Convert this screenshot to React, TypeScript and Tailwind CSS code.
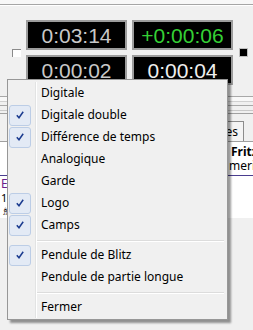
import React from "react";

type Item = { label: string; checked?: boolean } | { sep: true };

const items: Item[] = [
  { label: "Digitale" },
  { label: "Digitale double", checked: true },
  { label: "Différence de temps", checked: true },
  { label: "Analogique" },
  { label: "Garde" },
  { label: "Logo", checked: true },
  { label: "Camps", checked: true },
  { sep: true },
  { label: "Pendule de Blitz", checked: true },
  { label: "Pendule de partie longue" },
  { sep: true },
  { label: "Fermer" },
];

function Check() {
  return (
    <svg width="8" height="8" viewBox="0 0 8 8">
      <path d="M0.8 4.2 L3 6.8 L7.2 0.8" fill="none" stroke="#1b3b8f" strokeWidth="1.5" />
    </svg>
  );
}

function Clock({ text, color }: { text: string; color: string }) {
  return (
    <div className="h-[30px] bg-black border-2 border-[#9c9c9c] flex items-center justify-center">
      <span
        className={`text-[21px] leading-none ${color}`}
        style={{ fontFamily: '"Liberation Sans", Arial, sans-serif' }}
      >
        {text}
      </span>
    </div>
  );
}

export default function App() {
  return (
    <div
      className="relative w-[253px] h-[330px] overflow-hidden bg-[#f0f0f0] text-black"
      style={{ fontFamily: '"Noto Sans", "Open Sans", sans-serif' }}
    >
      {/* top strip */}
      <div className="h-[4px] bg-[#f7f7f7]" />
      <div className="h-px bg-[#a5a5a5]" />
      <div className="h-px bg-white" />

      {/* clocks */}
      <div className="flex items-center pl-[12px] pt-[14px]">
        <div className="w-[9px] h-[8px] bg-white border-t border-l border-[#8a8a8a]" />
        <div className="ml-[5px] grid grid-cols-[101px_101px] gap-[5px]">
          <Clock text="0:03:14" color="text-[#c8c8c8]" />
          <Clock text="+0:00:06" color="text-[#35d035]" />
          <Clock text="0:00:02" color="text-[#c8c8c8]" />
          <Clock text="0:00:04" color="text-[#eeeeee]" />
        </div>
        <div className="ml-[6px] w-[9px] h-[9px] bg-black border border-[#c0c0c0]" />
      </div>

      {/* background toolbar lines */}
      <div className="h-[11px]" />
      <div className="h-px bg-[#a8a8a8]" />
      <div className="h-[4px] bg-[#f8f8f8]" />
      <div className="h-px bg-[#d0d0d0]" />
      <div className="h-[3px]" />
      <div className="h-px bg-[#a8a8a8]" />
      <div className="h-[4px]" />
      <div className="h-px bg-[#c8c8c8]" />
      <div className="h-[2px]" />
      <div className="h-px bg-[#a0a0a0]" />
      <div className="h-[7px]" />

      {/* tabs */}
      <div className="h-[20px] flex justify-end pr-[9px]">
        <div className="h-[20px] px-[5px] border-t border-l border-r border-[#8c8c8c] bg-[#f4f4f4] text-[12px] leading-[20px]">
          Notes
        </div>
      </div>
      <div className="h-px bg-[#a0a0a0]" />

      {/* panel */}
      <div className="bg-white flex">
        <div className="w-[229px]" />
        <div className="flex-1 whitespace-nowrap overflow-hidden">
          <div className="pl-[2px] pt-[3px] h-[17px] leading-[13px] text-[12px] font-bold">Fritz</div>
          <div className="h-[13px] leading-[13px] text-[12px]">meric</div>
          <div className="h-[3px]" />
        </div>
      </div>
      <div className="h-px bg-[#4a3d8f]" />
      <div className="bg-white flex h-[42px] whitespace-nowrap">
        <div className="w-[229px] pl-[1px] pt-[1px]">
          <div className="h-[14px] leading-[14px] text-[12px] text-[#6a1f8a]">E</div>
          <div className="h-[14px] leading-[14px] text-[11px]">1</div>
          <div className="h-[13px] leading-[13px] text-[10px]">♗</div>
        </div>
        <div className="flex-1 pl-[1px] pt-[19px] h-[14px] leading-[14px] text-[12px] overflow-hidden">exd4</div>
      </div>

      {/* context menu */}
      <div
        className="absolute left-[7px] top-[79px] w-[221px] border border-[#979797] bg-[#f0f0f0] pt-[2px] pb-[1px] shadow-[3px_3px_2px_rgba(0,0,0,0.4)] text-[12px]"
      >
        {items.map((it, i) =>
          "sep" in it ? (
            <div key={i} className="flex h-[8px]">
              <div className="w-[28px] border-r border-[#e2e3e3]" />
              <div className="flex-1 border-l border-white pt-[4px] pr-[3px]">
                <div className="h-px bg-[#dcdcdc]" />
                <div className="h-px bg-white" />
              </div>
            </div>
          ) : (
            <div key={i} className="flex h-[22px]">
              <div className="w-[28px] border-r border-[#e2e3e3] flex items-center">
                {it.checked && (
                  <div className="ml-[1px] w-[22px] h-[21px] rounded-[3px] border border-[#bccde6] bg-[#e3eaf5] flex items-center justify-center">
                    <Check />
                  </div>
                )}
              </div>
              <div className="flex-1 border-l border-white pl-[4px] flex items-center leading-none whitespace-nowrap">
                {it.label}
              </div>
            </div>
          )
        )}
      </div>
    </div>
  );
}
